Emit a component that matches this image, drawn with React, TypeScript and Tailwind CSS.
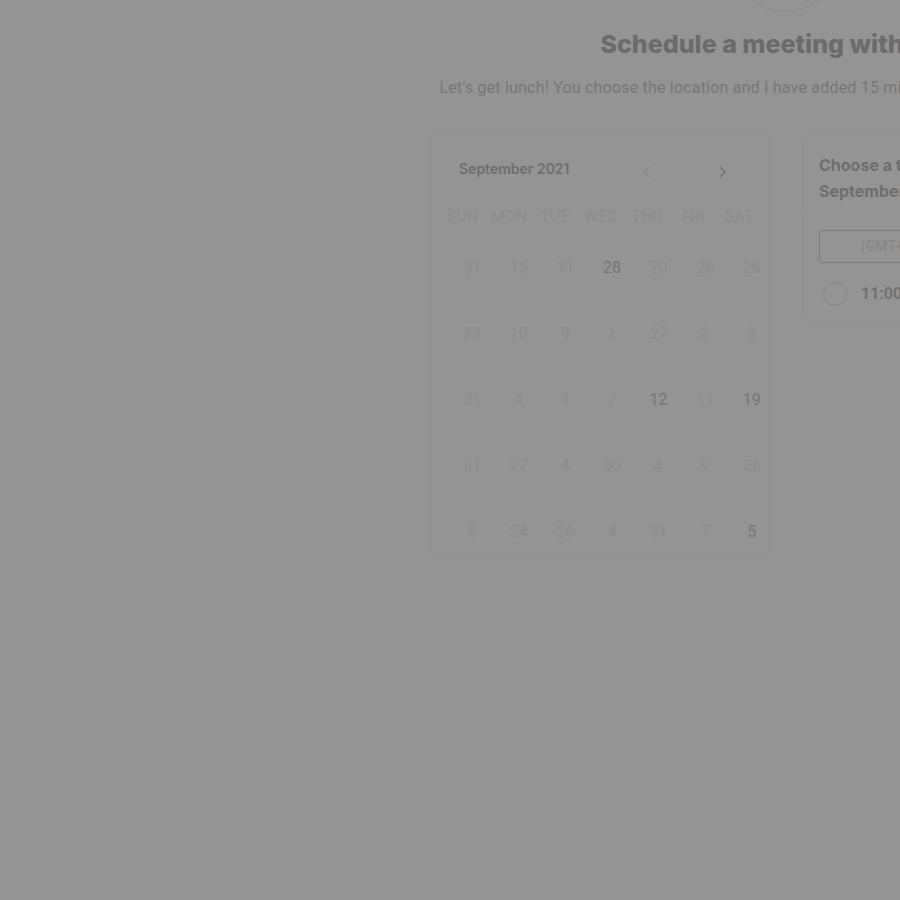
import React from "react";

const weeks: { n: string; dark?: boolean }[][] = [
  [{ n: "31" }, { n: "15" }, { n: "11" }, { n: "28", dark: true }, { n: "20" }, { n: "26" }, { n: "26" }],
  [{ n: "22" }, { n: "10" }, { n: "9" }, { n: "1" }, { n: "27" }, { n: "2" }, { n: "2" }],
  [{ n: "21" }, { n: "4" }, { n: "7" }, { n: "7" }, { n: "12", dark: true }, { n: "11" }, { n: "19", dark: true }],
  [{ n: "31" }, { n: "27" }, { n: "4" }, { n: "30" }, { n: "4" }, { n: "9" }, { n: "26" }],
  [{ n: "8" }, { n: "24" }, { n: "26" }, { n: "4" }, { n: "31" }, { n: "7" }, { n: "5", dark: true }],
];

const days = ["SUN", "MON", "TUE", "WED", "THU", "FRI", "SAT"];

export default function App() {
  return (
    <div
      className="w-[900px] h-[900px] overflow-hidden bg-[#949494]"
      style={{ fontFamily: "Roboto, 'Liberation Sans', sans-serif" }}
    >
      <div className="w-[1570px] flex flex-col items-center">
        <div className="w-[114px] h-[114px] rounded-full border border-[#8c8c8c] mt-[-102px] shrink-0" />
        <h1
          className="mt-[16px] text-[25px] leading-[32px] font-extrabold text-[#6b6b6b] whitespace-nowrap"
          style={{ fontFamily: "Inter, 'Liberation Sans', sans-serif" }}
        >
          Schedule a meeting with Jane
        </h1>
        <p className="mt-[16px] text-[16px] leading-[24px] tracking-[0.2px] text-[#777777] whitespace-nowrap">
          Let's get lunch! You choose the location and I have added 15 minutes of travel time for us both.
        </p>
        <div className="mt-[35px] flex gap-[34px] items-start">
          {/* Calendar card */}
          <div className="w-[338px] h-[420px] border border-[#8f8f8f] rounded-[4px] flex flex-col overflow-hidden">
            <div className="flex items-center h-[64px] shrink-0 pl-[27px] pr-[38px]">
              <span
                className="text-[14px] font-semibold text-[#6e6e6e] w-[187px]"
                style={{ fontFamily: "Inter, 'Liberation Sans', sans-serif" }}
              >
                September 2021
              </span>
              <div className="flex items-center gap-[59px] mt-[8px]">
                <svg width="16" height="16" viewBox="0 0 16 16" fill="none" stroke="#888888" strokeWidth="1.3">
                  <path d="M10 3 L5 8 L10 13" />
                </svg>
                <svg width="16" height="16" viewBox="0 0 16 16" fill="none" stroke="#6e6e6e" strokeWidth="1.3">
                  <path d="M6 3 L11 8 L6 13" />
                </svg>
              </div>
            </div>
            <div className="grid grid-cols-7 shrink-0 w-[322px] ml-[8px] mt-[5px] text-[16px] leading-[24px] text-[#8c8c8c]">
              {days.map((d) => (
                <div key={d} className="text-center">{d}</div>
              ))}
            </div>
            <div className="flex flex-col shrink-0 w-[326px] ml-[17px] mt-[19px]">
              {weeks.map((w, i) => (
                <div key={i} className="grid grid-cols-7 shrink-0 h-[66px] text-[16px] leading-[40px]">
                  {w.map((d, j) => (
                    <div
                      key={j}
                      className={d.dark ? "text-center text-[#767676]" : "text-center text-[#8c8c8c]"}
                    >
                      {d.n}
                    </div>
                  ))}
                </div>
              ))}
            </div>
          </div>
          {/* Time panel */}
          <div className="w-[336px] border border-[#8f8f8f] rounded-[4px] flex flex-col">
            <div
              className="pl-[15px] pr-[12px] pt-[16px] pb-[9px] border-b border-[#909090] text-[16px] leading-[26px] font-bold text-[#6e6e6e]"
              style={{ fontFamily: "Inter, 'Liberation Sans', sans-serif" }}
            >
              <div>Choose a time on</div>
              <div>September 28, 2021</div>
            </div>
            <div className="pl-[15px] pr-[12px] pt-[16px] pb-[14px] flex flex-col">
              <div className="h-[33px] border border-[#7c7c7c] rounded-[3px] flex items-center pl-[41px] text-[14px] text-[#858585] whitespace-nowrap">
                (GMT-04:00) Eastern Time
              </div>
              <div className="flex items-center mt-[19px]">
                <div className="w-[24px] h-[24px] rounded-full border-[1.5px] border-[#878787] ml-[4px]" />
                <span className="ml-[14px] text-[16px] font-bold text-[#727272]">11:00 AM</span>
              </div>
            </div>
          </div>
        </div>
      </div>
    </div>
  );
}
